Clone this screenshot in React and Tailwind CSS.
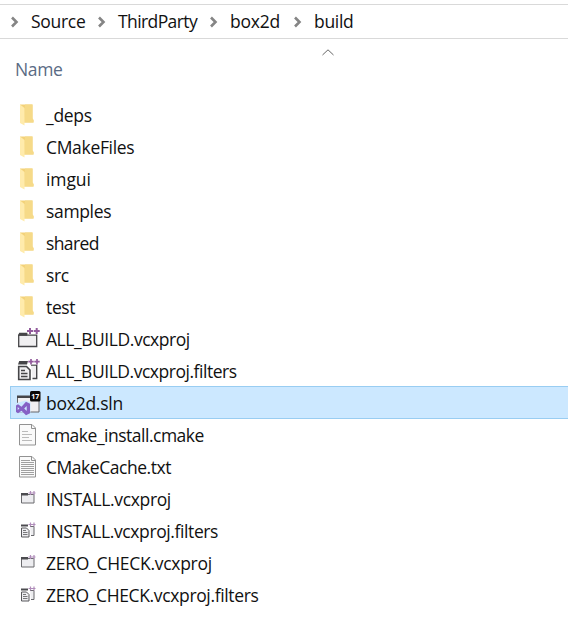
const Folder = () => (
  <svg width="24" height="24" viewBox="0 0 24 24" className="mt-[2px]">
    <path d="M3 .500h12.500v14l1 1.500v2.500H7z" fill="#f3d27a" />
    <path d="M8 .500h7.500v14l1 1.500v2.500H7z" fill="#f6da88" />
    <path d="M3 .500l4.500 3.500v17.500L3 19z" fill="#ffebac" />
  </svg>
);

const Project = () => (
  <svg width="24" height="24" viewBox="0 0 24 24">
    <path d="M1.700 8.200h18v11.300h-18z" fill="#f0eff1" stroke="#454548" strokeWidth="1.300" />
    <path d="M1 8.800l1.200-3h8.800L10 8.800z" fill="#454548" />
    <path d="M10.500 0h13v7h-13z" fill="#fff" />
    <path d="M13 1v6M10 4h6M19.700 1v6M16.700 4h6" stroke="#925a9c" strokeWidth="2" />
  </svg>
);

const Filters = () => (
  <svg width="24" height="24" viewBox="0 0 24 24">
    <path d="M14 6h5.700v13.500H15.500" fill="#f0eff1" stroke="#454548" strokeWidth="1.400" />
    <path d="M1 5.500L2.200 2H11l-1 3.500z" fill="#454548" />
    <path d="M1.700 7.500h7.800l3.500 3.500v9.500H1.700z" fill="#f0eff1" stroke="#454548" strokeWidth="1.600" />
    <path d="M4 11.500h4M4 14.500h6.500M4 17.500h6.500" stroke="#454548" strokeWidth="1.300" />
    <path d="M11.500 0h12v5.500h-12z" fill="#fff" />
    <path d="M14 0v5.400M11.300 2.700h5.400M20 0v5.400M17.300 2.700h5.400" stroke="#925a9c" strokeWidth="1.700" />
  </svg>
);

const SmallProject = () => (
  <svg width="24" height="24" viewBox="0 0 24 24" className="mt-[2px]">
    <path d="M4.500 6.500h12.500v8.500h-12.500z" fill="#ededf0" stroke="#6b6b6f" />
    <path d="M4 5h7v2.500H4z" fill="#4c4c50" />
    <path d="M13.500 3v4M11.500 5h4M17 3v4M15.500 5h3" stroke="#b08dba" strokeWidth="1.200" />
  </svg>
);

const SmallFilters = () => (
  <svg width="24" height="24" viewBox="0 0 24 24" className="mt-[2px]">
    <path d="M13 6.500h4v9h-3" fill="#ededf0" stroke="#69696d" />
    <path d="M4 4.500h7v2H4z" fill="#4c4c50" />
    <path d="M4.500 8h5l2.500 2.500V17H4.500z" fill="#ededf0" stroke="#58585c" />
    <path d="M6 10.500h3M6 12.500h4.500M6 14.500h4.500" stroke="#58585c" strokeWidth=".8" />
    <path d="M13.500 2.500v4M11.500 4.500h4M17 2.500v4M15.500 4.500h3" stroke="#b08dba" strokeWidth="1.200" />
  </svg>
);

const Solution = () => (
  <svg width="25" height="26" viewBox="0 0 25 26" className="overflow-visible">
    <path d="M.5 5.500h21.500v15.500H.5z" fill="#f0eff1" stroke="#66666b" />
    <path d="M0 4.500h13V7H0z" fill="#454548" />
    <path d="M-2 12.500L8.500 9.500l5 2v10H-2z" fill="#cce8ff" />
    <path
      d="M-1 14.500l2-1.200 3.500 2.500 4.500-5 4 2v9.500l-4 2-4.500-4.500-3.500 2.500-2-1.200zM.7 16v3l1.700-1.500zM9.700 15l-2.500 2.500 2.500 2.500z"
      fill="#8661c5"
      fillRule="evenodd"
    />
    <rect x="13" y="0" width="10.500" height="10.500" rx="1.500" fill="#080808" />
    <text x="18.200" y="7.800" textAnchor="middle" fontSize="7" fontWeight="700" fill="#fff" fontFamily="Open Sans, sans-serif">17</text>
  </svg>
);

const Doc = ({ full }) => (
  <svg width="24" height="24" viewBox="0 0 24 24">
    <path d="M2.500 1.500h12.500l3.500 3.500v17h-16z" fill="#fafafa" stroke="#929292" />
    <path d="M14.500 1.500v4h4" fill="none" stroke="#929292" />
    <path
      d={full ? 'M4 5.500h9M4 7.500h13M4 9.500h13M4 11.500h13M4 13.500h13M4 15.500h13M4 17.500h13M4 19.500h13' : 'M5 8.500h6M5 11.500h10M5 14.500h7M5 17.500h10'}
      stroke={full ? '#a0a0a0' : '#bbb'}
    />
  </svg>
);

const files = [
  { name: '_deps', icon: <Folder />, track: 'tracking-[-0.28px]' },
  { name: 'CMakeFiles', icon: <Folder />, track: 'tracking-[-0.32px]' },
  { name: 'imgui', icon: <Folder />, track: 'tracking-[-0.1px]' },
  { name: 'samples', icon: <Folder />, track: 'tracking-[-0.34px]' },
  { name: 'shared', icon: <Folder />, track: 'tracking-[-0.6px]' },
  { name: 'src', icon: <Folder />, track: 'tracking-[-0.4px]' },
  { name: 'test', icon: <Folder />, track: 'tracking-[-0.35px]' },
  { name: 'ALL_BUILD.vcxproj', icon: <Project />, track: 'tracking-[-0.45px]' },
  { name: 'ALL_BUILD.vcxproj.filters', icon: <Filters />, track: 'tracking-[-0.47px]' },
  { name: 'box2d.sln', icon: <Solution />, track: 'tracking-[-0.25px]', selected: true },
  { name: 'cmake_install.cmake', icon: <Doc />, track: 'tracking-[-0.49px]' },
  { name: 'CMakeCache.txt', icon: <Doc full />, track: 'tracking-[-0.46px]' },
  { name: 'INSTALL.vcxproj', icon: <SmallProject />, track: 'tracking-[-0.36px]' },
  { name: 'INSTALL.vcxproj.filters', icon: <SmallFilters />, track: 'tracking-[-0.4px]' },
  { name: 'ZERO_CHECK.vcxproj', icon: <SmallProject />, track: 'tracking-[-0.28px]' },
  { name: 'ZERO_CHECK.vcxproj.filters', icon: <SmallFilters />, track: 'tracking-[-0.36px]' },
];

const crumbs = [
  { name: 'Source', style: 'w-[87px] tracking-[-0.3px]' },
  { name: 'ThirdParty', style: 'w-[112px] tracking-[-0.6px]' },
  { name: 'box2d', style: 'w-[84px] tracking-[-0.2px]' },
  { name: 'build', style: 'w-[70px] tracking-[-0.3px]' },
];

export default function App() {
  return (
    <div className="h-[622px] w-[568px] overflow-hidden bg-white pt-1 font-['Open_Sans',sans-serif] text-[17.5px] text-[#111]">
      <nav className="flex h-[35px] items-center border-y border-[#d9d9d9] pl-[10px]">
        {crumbs.map((c) => (
          <div key={c.name} className={`flex items-center ${c.style}`}>
            <svg width="9" height="12" viewBox="0 0 9 12" className="mr-3 shrink-0">
              <path d="M2 1.500L6.500 6 2 10.500" fill="none" stroke="#858585" strokeWidth="2.600" />
            </svg>
            <span>{c.name}</span>
          </div>
        ))}
      </nav>
      <header className="flex h-[59px] flex-col pl-[15px] text-[#5a6b84]">
        <svg width="12" height="7" viewBox="0 0 12 7" className="mt-[10px] ml-[307px]">
          <path d="M.5 6L6 .8 11.500 6" fill="none" stroke="#666" />
        </svg>
        <span className="mt-px leading-6 tracking-[-0.35px]">Name</span>
      </header>
      <ul>
        {files.map((f) => (
          <li
            key={f.name}
            className={`ml-[10px] flex items-center border-y border-l pt-[2px] pl-[6px] ${f.selected ? '-mb-px h-[33px] border-[#99cdf2] bg-[#cce8ff]' : 'h-8 border-transparent'}`}
          >
            <span className="flex w-[29px] shrink-0 items-center">{f.icon}</span>
            <span className={`whitespace-nowrap ${f.track}`}>{f.name}</span>
          </li>
        ))}
      </ul>
    </div>
  );
}
